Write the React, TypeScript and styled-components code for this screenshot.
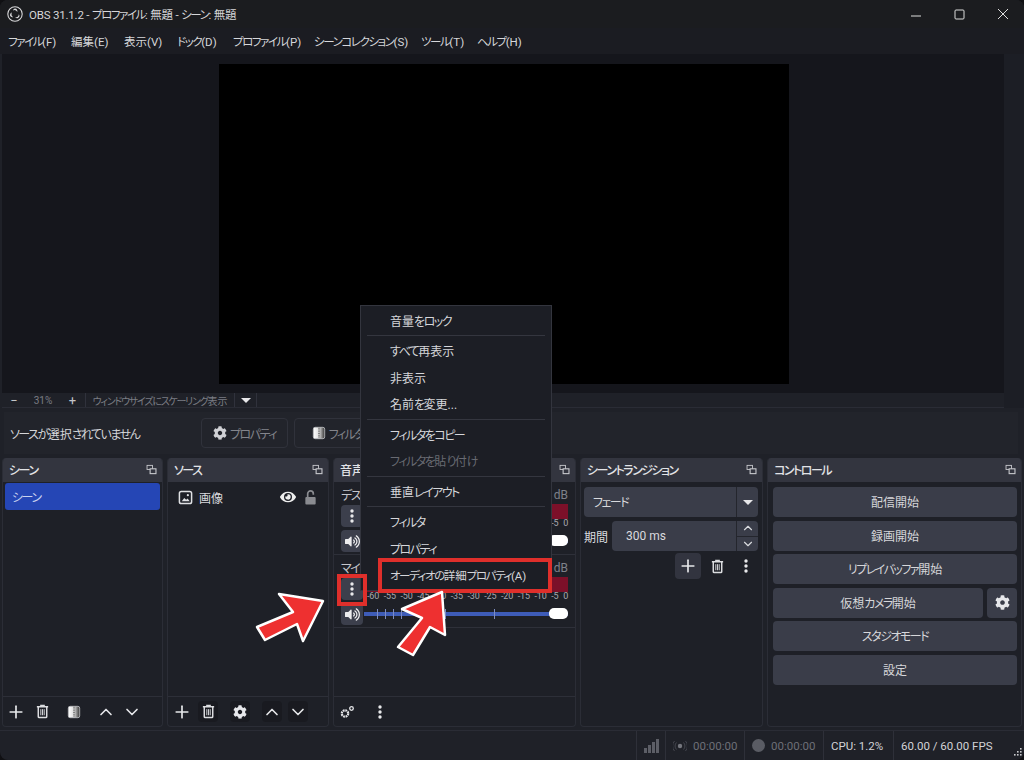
import React from "react";
import styled, { createGlobalStyle } from "styled-components";
import { Plus, ChevronUp, ChevronDown } from "lucide-react";
import { FaCog, FaEye, FaVolumeUp } from "react-icons/fa";

const Global = createGlobalStyle`
  html, body { margin: 0; padding: 0; background: #101013; }
  * { box-sizing: border-box; }
  #root { width: 1024px; height: 760px; overflow: hidden; }
`;

const Win = styled.div`
  position: relative;
  width: 1024px;
  height: 760px;
  display: flex;
  flex-direction: column;
  background: #1f2128;
  color: #d9dade;
  font-family: "Roboto", "Noto Sans CJK JP", sans-serif;
  font-feature-settings: "palt";
  font-size: 12px;
  overflow: hidden;
  border-radius: 8px;
  white-space: nowrap;
`;
const Kana = styled.span`
  letter-spacing: -0.125em;
`;
const TitleBar = styled.div`
  height: 28px;
  display: flex;
  align-items: center;
  padding-left: 7px;
  background: #1b1c1f;
  color: #d6d6d8;
`;
const TitleText = styled.span`
  flex: 1;
  margin-left: 6px;
  font-size: 11.5px;
  letter-spacing: -0.2px;
`;
const WinBtn = styled.div`
  width: 43px;
  display: flex;
  justify-content: center;
  align-items: center;
`;
const MenuBar = styled.div`
  height: 26px;
  display: flex;
  align-items: center;
  padding-bottom: 1px;
  background: #1b1c22;
  font-size: 11.5px;
  color: #d6d7da;
`;
const MenuEntry = styled.span<{ $x: number }>`
  width: ${(p) => p.$x}px;
  padding-left: 8px;
`;
const PreviewRow = styled.div`
  flex: none;
  height: 354px;
  display: flex;
`;
const PreviewCol = styled.div`
  width: 1002px;
  margin-left: 2px;
  display: flex;
  flex-direction: column;
`;
const Preview = styled.div`
  height: 339px;
  background: #15161c;
  display: flex;
  justify-content: center;
  padding: 10px 0 0 2px;
`;
const Canvas = styled.div`
  width: 570px;
  height: 320px;
  background: #000;
`;
const VScroll = styled.div`
  flex: 1;
  background: #1c1e25;
`;
const ZoomBar = styled.div`
  height: 15px;
  display: flex;
  align-items: center;
  background: #1f2128;
  font-size: 10px;
  color: #7b7d84;
  border-bottom: 1px solid #2a2c35;
`;
const ZoomCell = styled.div<{ $w: number; $b?: boolean; $strong?: boolean }>`
  width: ${(p) => p.$w}px;
  height: 100%;
  display: flex;
  align-items: center;
  justify-content: center;
  border-right: ${(p) => (p.$b ? "1px solid #30323c" : "none")};
  color: ${(p) => (p.$strong ? "#c4c5c9" : "inherit")};
  font-size: ${(p) => (p.$strong ? "13px" : "inherit")};
`;
const Triangle = styled.div`
  width: 0;
  height: 0;
  border-left: 5px solid transparent;
  border-right: 5px solid transparent;
  border-top: 5px solid #e8e8ea;
`;
const ContextBar = styled.div`
  height: 42px;
  margin: 4px 6px 0 4px;
  display: flex;
  align-items: center;
  background: #22242b;
  padding-left: 6px;
  color: #d5d6da;
`;
const ContextLabel = styled.div`
  width: 191px;
`;
const CtxBtn = styled.div<{ $w: number }>`
  width: ${(p) => p.$w}px;
  height: 30px;
  margin-right: 6px;
  border: 1px solid #30323b;
  border-radius: 4px;
  display: flex;
  align-items: center;
  justify-content: center;
  gap: 3px;
  color: #83858c;
`;
const Docks = styled.div`
  height: 269px;
  margin-top: 4px;
  padding: 0 2px;
  display: flex;
  gap: 4px;
`;
const Dock = styled.div<{ $w: number }>`
  width: ${(p) => p.$w}px;
  display: flex;
  flex-direction: column;
  background: #1e2027;
  border-radius: 4px;
  border: 1px solid #2b2d36;
  border-top: none;
  overflow: hidden;
`;
const DockHead = styled.div`
  height: 24px;
  flex: none;
  background: #33353f;
  display: flex;
  align-items: center;
  justify-content: space-between;
  padding: 0 5px 2px 6px;
  font-weight: 500;
  color: #e2e3e6;
`;
const DockBody = styled.div<{ $pad?: string }>`
  flex: 1;
  padding: ${(p) => p.$pad || "0"};
  display: flex;
  flex-direction: column;
  min-height: 0;
`;
const DockFoot = styled.div<{ $pl?: number }>`
  height: 30px;
  flex: none;
  border-top: 1px solid #2d2f38;
  display: flex;
  align-items: center;
  padding-left: ${(p) => p.$pl ?? 3}px;
`;
const ToolBtn = styled.div<{ $ml?: number; $dark?: boolean }>`
  width: 20px;
  height: 21px;
  margin-left: ${(p) => p.$ml ?? 0}px;
  display: flex;
  align-items: center;
  justify-content: center;
  border-radius: 4px;
  color: #e6e7ea;
  background: ${(p) => (p.$dark ? "#191a20" : "transparent")};
`;
const SceneItem = styled.div`
  margin: 1px 2px 0 2px;
  height: 27px;
  border-radius: 3px;
  background: #2546b5;
  color: #c9d2ef;
  display: flex;
  align-items: center;
  padding: 0 0 1px 7px;
`;
const SourceItem = styled.div`
  height: 28px;
  margin-top: 1px;
  display: flex;
  align-items: center;
  padding: 0 10px 0 10px;
  gap: 6px;
`;
const SourceName = styled.span`flex: 1;`;
const EyeBox = styled.span`
  display: flex;
  margin-right: 1px;
`;
const MixerEntry = styled.div`
  height: 73px;
  padding: 3px 7px 0;
  border-bottom: 1px solid #2e3039;
  display: flex;
  flex-direction: column;
`;
const MixerTop = styled.div`
  height: 19px;
  display: flex;
  justify-content: space-between;
  align-items: center;
  color: #c5c6cb;
`;
const MixerDb = styled.span`color: #7f818a;`;
const MixerRow = styled.div`
  height: 24px;
  margin-bottom: 1px;
  display: flex;
  align-items: center;
  gap: 1px;
`;
const MixBtn = styled.div`
  width: 22px;
  height: 22px;
  flex: none;
  background: #3c3f4c;
  border-radius: 4px;
  display: flex;
  align-items: center;
  justify-content: center;
  color: #ececee;
`;
const Meter = styled.div`
  flex: 1;
  display: flex;
  flex-direction: column;
  height: 100%;
`;
const MeterBar = styled.div`
  height: 15px;
  flex: none;
  background: #7c1029;
`;
const Ticks = styled.div`
  display: flex;
  justify-content: space-between;
  font-size: 9px;
  color: #a8a9af;
  line-height: 9px;
  letter-spacing: -0.2px;
  padding-left: 3px;
`;
const Slider = styled.div`
  position: relative;
  flex: 1;
  height: 4px;
  background: #3e5cb8;
`;
const SliderTick = styled.div<{ $x: number }>`
  position: absolute;
  left: ${(p) => p.$x}px;
  top: -3px;
  width: 1px;
  height: 10px;
  background: #7e8cc0;
`;
const Thumb = styled.div`
  position: absolute;
  right: 0;
  top: -4px;
  width: 19px;
  height: 11px;
  border-radius: 5px;
  background: #fff;
`;
const Select = styled.div`
  height: 30px;
  flex: none;
  background: #3a3d49;
  border-radius: 4px;
  display: flex;
  align-items: center;
  padding-left: 9px;
  color: #d8d9dc;
`;
const SelectText = styled.span`
  flex: 1;
  padding-bottom: 1px;
`;
const SelectArrow = styled.div`
  width: 22px;
  height: 100%;
  border-left: 1px solid #24262d;
  display: flex;
  align-items: center;
  justify-content: center;
`;
const DurationRow = styled.div`
  margin-top: 4px;
  height: 30px;
  flex: none;
  display: flex;
  align-items: center;
`;
const DurLabel = styled.span`width: 28px;`;
const DurInput = styled.div`
  flex: 1;
  height: 30px;
  background: #3a3d49;
  border-radius: 4px;
  display: flex;
  align-items: center;
  padding-left: 14px;
`;
const DurText = styled.span`flex: 1;`;
const Spin = styled.div`
  width: 22px;
  height: 100%;
  display: flex;
  flex-direction: column;
  border-left: 1px solid #24262d;
`;
const SpinHalf = styled.div`
  flex: 1;
  display: flex;
  align-items: center;
  justify-content: center;
  &:first-child { border-bottom: 1px solid #24262d; }
`;
const TransTools = styled.div`
  margin: 2px -1px 0 0;
  display: flex;
  justify-content: flex-end;
  gap: 3px;
`;
const AddBtn = styled.div<{ $bg?: boolean }>`
  width: 26px;
  height: 26px;
  display: flex;
  align-items: center;
  justify-content: center;
  border-radius: 4px;
  color: #e6e7ea;
  background: ${(p) => (p.$bg ? "#32343f" : "transparent")};
`;
const CtlBtn = styled.div`
  height: 30px;
  flex: 1;
  padding-bottom: 1px;
  background: #3a3d49;
  border-radius: 4px;
  display: flex;
  align-items: center;
  justify-content: center;
  color: #d6d7da;
`;
const CtlRow = styled.div`
  display: flex;
  gap: 4px;
  height: 30px;
  flex: none;
  margin-bottom: 3.6px;
`;
const CtlGear = styled.div`
  width: 30px;
  height: 30px;
  background: #3a3d49;
  border-radius: 4px;
  display: flex;
  align-items: center;
  justify-content: center;
  color: #e6e7ea;
`;
const StatusBar = styled.div`
  height: 30px;
  margin-top: 3px;
  border-top: 1px solid #2a2c35;
  display: flex;
  justify-content: flex-end;
  align-items: stretch;
  font-size: 11.5px;
  color: #d2d3d7;
`;
const StatusCell = styled.div<{ $w: number; $dim?: boolean }>`
  width: ${(p) => p.$w}px;
  border-left: 1px solid #2e3039;
  display: flex;
  align-items: center;
  padding-left: 7px;
  gap: 6px;
  color: ${(p) => (p.$dim ? "#6d6f77" : "#d2d3d7")};
`;
const GripWrap = styled.div`
  margin-left: auto;
  margin-right: 2px;
  align-self: flex-end;
  display: flex;
  margin-bottom: 3px;
`;
const RecDot = styled.div`
  width: 13px;
  height: 13px;
  border-radius: 50%;
  background: #5a5c64;
`;
const ContextMenu = styled.div`
  position: absolute;
  left: 360px;
  top: 305px;
  width: 192px;
  padding: 1px 0 0;
  height: 286px;
  background: #1c1e25;
  border: 1px solid #33353e;
  color: #d5d6da;
`;
const MenuItem = styled.div<{ $off?: boolean }>`
  height: 26.5px;
  display: flex;
  align-items: center;
  padding-left: 29px;
  color: ${(p) => (p.$off ? "#686a72" : "#d5d6da")};
  &:last-child { font-size: 11.5px; }
`;
const MenuItemText = styled.span``;
const MenuSep = styled.div`
  height: 1px;
  margin: 1.5px 6px;
  background: #34363f;
`;
const RedBox = styled.div<{ $x: number; $y: number; $w: number; $h: number }>`
  position: absolute;
  left: ${(p) => p.$x}px;
  top: ${(p) => p.$y}px;
  width: ${(p) => p.$w}px;
  height: ${(p) => p.$h}px;
  border: 4px solid #df2f2b;
`;
const ArrowSvg = styled.svg`
  position: absolute;
  left: 0;
  top: 0;
  pointer-events: none;
`;

/* Yu Gothic UI style kana are narrower than Noto's: tighten kana runs only. */
const J = ({ t }: { t: string }) => (
  <>
    {t.split(/([\u3040-\u30ff]+)/).map((part, i) =>
      i % 2 ? <Kana key={i}>{part}</Kana> : part
    )}
  </>
);

const Icon = ({ size = 14, children }: { size?: number; children: React.ReactNode }) => (
  <svg width={size} height={size} viewBox="0 0 16 16">{children}</svg>
);
const Float = () => (
  <Icon size={11}>
    <rect x="1.5" y="2" width="8" height="6" fill="none" stroke="#c8c9cd" strokeWidth="1.3" />
    <rect x="6" y="7" width="8.5" height="7" fill="#33353f" stroke="#c8c9cd" strokeWidth="1.6" />
  </Icon>
);
const Trash = () => (
  <Icon size={15}>
    <path d="M2 3h12M3.5 3v10.5a1 1 0 0 0 1 1h7a1 1 0 0 0 1-1V3M5.5 1.5h5" fill="none" stroke="#dcdde0" strokeWidth="1.6" />
    <path d="M6.2 5.5v6.5M8 5.5v6.5M9.8 5.5v6.5" stroke="#dcdde0" strokeWidth="1" />
  </Icon>
);
const FilterIcon = () => (
  <Icon size={14}>
    <defs>
      <linearGradient id="fg" x1="0" x2="1" y1="0" y2="0">
        <stop offset="0" stopColor="#fff" />
        <stop offset="0.5" stopColor="#ddd" />
        <stop offset="1" stopColor="#333" />
      </linearGradient>
    </defs>
    <rect x="1.5" y="1.5" width="13" height="13" rx="2" fill="url(#fg)" stroke="#b8b9bd" strokeWidth="1" />
    <path d="M8 2v12" stroke="#777" strokeDasharray="1 1" strokeWidth="2" />
  </Icon>
);
const Dots = ({ color = "#e8e9eb" }: { color?: string }) => (
  <Icon size={16}>
    <circle cx="8" cy="3" r="1.7" fill={color} />
    <circle cx="8" cy="8" r="1.7" fill={color} />
    <circle cx="8" cy="13" r="1.7" fill={color} />
  </Icon>
);
const Gears = () => (
  <svg width="16" height="14" viewBox="0 0 16 14">
    <circle cx="6" cy="8.5" r="3.2" fill="none" stroke="#e6e7ea" strokeWidth="2.2" strokeDasharray="1.8 0.7" />
    <circle cx="12.5" cy="3.5" r="1.8" fill="none" stroke="#e6e7ea" strokeWidth="1.3" />
  </svg>
);
const ImageIcon = () => (
  <Icon size={15}>
    <rect x="1.5" y="1.5" width="13" height="13" rx="2" fill="none" stroke="#dfe0e3" strokeWidth="1.6" />
    <path d="M4 12l2.7-3.5 2 2 1.5-1.5L12.5 12z" fill="#dfe0e3" />
    <circle cx="10.5" cy="5.5" r="1.2" fill="#dfe0e3" />
  </Icon>
);
const Lock = () => (
  <Icon size={15}>
    <path d="M5 8V4a3 3 0 0 1 6 0v1" fill="none" stroke="#8a8b90" strokeWidth="1.8" />
    <rect x="2.5" y="7.5" width="11" height="8" rx="1" fill="#8a8b90" />
  </Icon>
);
const Logo = () => (
  <svg width="16" height="16" viewBox="0 0 16 16">
    <circle cx="8" cy="8" r="7.2" fill="#1b1c1f" stroke="#d8d8da" strokeWidth="1.1" />
    <path d="M8 2.6a2.4 2.4 0 0 1 2.2 3.4A2.9 2.9 0 0 0 6 4.4 2.4 2.4 0 0 1 8 2.6zM3.6 10.6A2.4 2.4 0 0 1 5 6.6a2.9 2.9 0 0 0 1.4 4.4 2.4 2.4 0 0 1-2.8-.4zM12.4 10.6a2.4 2.4 0 0 1-4.2.6 2.9 2.9 0 0 0 3.6-2.9 2.4 2.4 0 0 1 .6 2.3z" fill="#d8d8da" />
  </svg>
);
const Signal = () => (
  <svg width="15" height="14" viewBox="0 0 15 14">
    {[0, 1, 2, 3].map((i) => (
      <rect key={i} x={i * 4} y={9 - i * 3} width="3" height={5 + i * 3} fill="#5c5e66" />
    ))}
  </svg>
);
const Stream = () => (
  <svg width="14" height="12" viewBox="0 0 14 12">
    <circle cx="7" cy="6" r="2.2" fill="#75777e" />
    <path d="M3.5 2.5a5 5 0 0 0 0 7M10.5 2.5a5 5 0 0 1 0 7M1.5 1a7.5 7.5 0 0 0 0 10M12.5 1a7.5 7.5 0 0 1 0 10" fill="none" stroke="#44464e" strokeWidth="1" />
  </svg>
);
const Grip = () => (
  <svg width="10" height="10" viewBox="0 0 10 10">
    {[[8, 1], [5, 4], [8, 4], [2, 7], [5, 7], [8, 7]].map(([x, y]) => (
      <rect key={`${x}${y}`} x={x} y={y} width="1.6" height="1.6" fill="#c8c9cd" />
    ))}
  </svg>
);

const ticks = ["-60", "-55", "-50", "-45", "-40", "-35", "-30", "-25", "-20", "-15", "-10", "-5", "0"];
const sliderTicks = [13, 21, 29, 37, 81, 130];

const Mixer = ({ name }: { name: string }) => (
  <MixerEntry>
    <MixerTop>
      <span><J t={name} /></span>
      <MixerDb>0.0 dB</MixerDb>
    </MixerTop>
    <MixerRow>
      <MixBtn><Dots /></MixBtn>
      <Meter>
        <MeterBar />
        <Ticks>{ticks.map((t) => <span key={t}>{t}</span>)}</Ticks>
      </Meter>
    </MixerRow>
    <MixerRow>
      <MixBtn><FaVolumeUp size={15} /></MixBtn>
      <Slider>
        {sliderTicks.map((x) => <SliderTick key={x} $x={x} />)}
        <Thumb />
      </Slider>
    </MixerRow>
  </MixerEntry>
);

const menuItems: (string | null | { off: string })[] = [
  "音量をロック", null, "すべて再表示", "非表示", "名前を変更...", null,
  "フィルタをコピー", { off: "フィルタを貼り付け" }, null, "垂直レイアウト", null,
  "フィルタ", "プロパティ", "オーディオの詳細プロパティ(A)",
];
const menus: [string, number][] = [
  ["ファイル(F)", 63], ["編集(E)", 53], ["表示(V)", 53], ["ドック(D)", 56],
  ["プロファイル(P)", 81], ["シーンコレクション(S)", 107], ["ツール(T)", 56], ["ヘルプ(H)", 70],
];

export default function App() {
  return (
    <Win>
      <Global />
      <TitleBar>
        <Logo />
        <TitleText><J t="OBS 31.1.2 - プロファイル: 無題 - シーン: 無題" /></TitleText>
        <WinBtn><svg width="11" height="11"><path d="M0 7h10" stroke="#ddd" /></svg></WinBtn>
        <WinBtn><svg width="11" height="11"><rect x="1" y="1" width="9" height="9" rx="1" fill="none" stroke="#ddd" /></svg></WinBtn>
        <WinBtn><svg width="12" height="12"><path d="M1 1l10 10M11 1L1 11" stroke="#ddd" /></svg></WinBtn>
      </TitleBar>
      <MenuBar>{menus.map(([m, w]) => <MenuEntry key={m} $x={w}><J t={m} /></MenuEntry>)}</MenuBar>
      <PreviewRow>
        <PreviewCol>
          <Preview><Canvas /></Preview>
          <ZoomBar>
            <ZoomCell $w={24} $strong>−</ZoomCell>
            <ZoomCell $w={34}>31%</ZoomCell>
            <ZoomCell $w={26} $b $strong>+</ZoomCell>
            <ZoomCell $w={149} $b><J t="ウィンドウサイズにスケーリング表示" /></ZoomCell>
            <ZoomCell $w={22} $b><Triangle /></ZoomCell>
          </ZoomBar>
        </PreviewCol>
        <VScroll />
      </PreviewRow>
      <ContextBar>
        <ContextLabel><J t="ソースが選択されていません" /></ContextLabel>
        <CtxBtn $w={87}><FaCog size={14} color="#d0d1d5" /><span><J t="プロパティ" /></span></CtxBtn>
        <CtxBtn $w={87}><FilterIcon /><span><J t="フィルタ" /></span></CtxBtn>
      </ContextBar>
      <Docks>
        <Dock $w={161}>
          <DockHead><span><J t="シーン" /></span><Float /></DockHead>
          <DockBody><SceneItem><span><J t="シーン" /></span></SceneItem></DockBody>
          <DockFoot>
            <ToolBtn><Plus size={20} /></ToolBtn>
            <ToolBtn $ml={6}><Trash /></ToolBtn>
            <ToolBtn $ml={12}><FilterIcon /></ToolBtn>
            <ToolBtn $ml={12}><ChevronUp size={24} /></ToolBtn>
            <ToolBtn $ml={6}><ChevronDown size={24} /></ToolBtn>
          </DockFoot>
        </Dock>
        <Dock $w={162}>
          <DockHead><span><J t="ソース" /></span><Float /></DockHead>
          <DockBody>
            <SourceItem>
              <ImageIcon />
              <SourceName>画像</SourceName>
              <EyeBox><FaEye size={16} color="#eee" /></EyeBox>
              <Lock />
            </SourceItem>
          </DockBody>
          <DockFoot $pl={4}>
            <ToolBtn><Plus size={20} /></ToolBtn>
            <ToolBtn $ml={6} $dark><Trash /></ToolBtn>
            <ToolBtn $ml={12} $dark><FaCog size={14} /></ToolBtn>
            <ToolBtn $ml={12} $dark><ChevronUp size={24} /></ToolBtn>
            <ToolBtn $ml={6} $dark><ChevronDown size={24} /></ToolBtn>
          </DockFoot>
        </Dock>
        <Dock $w={243}>
          <DockHead><span><J t="音声ミキサー" /></span><Float /></DockHead>
          <DockBody>
            <Mixer name="デスクトップ音声" />
            <Mixer name="マイク" />
          </DockBody>
          <DockFoot>
            <ToolBtn><Gears /></ToolBtn>
            <ToolBtn $ml={13}><Dots /></ToolBtn>
          </DockFoot>
        </Dock>
        <Dock $w={183}>
          <DockHead><span><J t="シーントランジション" /></span><Float /></DockHead>
          <DockBody $pad="5px 4px 0 3px">
            <Select>
              <SelectText><J t="フェード" /></SelectText>
              <SelectArrow><Triangle /></SelectArrow>
            </Select>
            <DurationRow>
              <DurLabel>期間</DurLabel>
              <DurInput>
                <DurText>300 ms</DurText>
                <Spin>
                  <SpinHalf><ChevronUp size={14} /></SpinHalf>
                  <SpinHalf><ChevronDown size={14} /></SpinHalf>
                </Spin>
              </DurInput>
            </DurationRow>
            <TransTools>
              <AddBtn $bg><Plus size={20} /></AddBtn>
              <AddBtn><Trash /></AddBtn>
              <AddBtn><Dots /></AddBtn>
            </TransTools>
          </DockBody>
        </Dock>
        <Dock $w={255}>
          <DockHead><span><J t="コントロール" /></span><Float /></DockHead>
          <DockBody $pad="5px 4px 0 5px">
            <CtlRow><CtlBtn>配信開始</CtlBtn></CtlRow>
            <CtlRow><CtlBtn>録画開始</CtlBtn></CtlRow>
            <CtlRow><CtlBtn><span><J t="リプレイバッファ開始" /></span></CtlBtn></CtlRow>
            <CtlRow><CtlBtn><span><J t="仮想カメラ開始" /></span></CtlBtn><CtlGear><FaCog size={15} /></CtlGear></CtlRow>
            <CtlRow><CtlBtn><span><J t="スタジオモード" /></span></CtlBtn></CtlRow>
            <CtlRow><CtlBtn>設定</CtlBtn></CtlRow>
          </DockBody>
        </Dock>
      </Docks>
      <StatusBar>
        <StatusCell $w={29} $dim><Signal /></StatusCell>
        <StatusCell $w={79} $dim><Stream />00:00:00</StatusCell>
        <StatusCell $w={79} $dim><RecDot />00:00:00</StatusCell>
        <StatusCell $w={70}>CPU: 1.2%</StatusCell>
        <StatusCell $w={131}>60.00 / 60.00 FPS<GripWrap><Grip /></GripWrap></StatusCell>
      </StatusBar>

      <ContextMenu>
        {menuItems.map((m, i) =>
          m === null ? <MenuSep key={i} /> :
          typeof m === "string" ? <MenuItem key={i}><MenuItemText><J t={m} /></MenuItemText></MenuItem> :
          <MenuItem key={i} $off><MenuItemText><J t={m.off} /></MenuItemText></MenuItem>
        )}
      </ContextMenu>
      <RedBox $x={378} $y={558} $w={174} $h={35} />
      <RedBox $x={337} $y={574} $w={30} $h={32} />
      <ArrowSvg width="1024" height="760">
        <polygon points="323,601 279,594 293,612 257,627 265,640 297,624 303,641" fill="#ee3030" stroke="#fff" strokeWidth="2.5" strokeLinejoin="round" />
        <polygon points="442,592 402,609 422,618 398,647 413,655 430,627 445,635" fill="#ee3030" stroke="#fff" strokeWidth="2.5" strokeLinejoin="round" />
      </ArrowSvg>
    </Win>
  );
}
